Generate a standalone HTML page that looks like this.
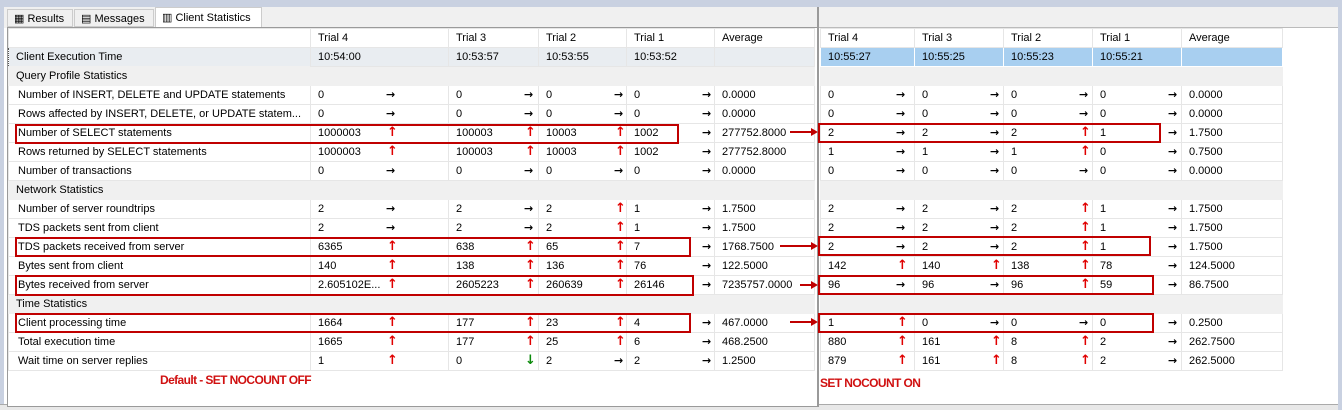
<!DOCTYPE html>
<html><head><meta charset="utf-8"><style>
*{margin:0;padding:0;box-sizing:border-box}
body{width:1342px;height:410px;background:#fff;font-family:"Liberation Sans",sans-serif;font-size:11px;color:#000;position:relative;overflow:hidden}
.abs{position:absolute}
table{border-collapse:collapse;table-layout:fixed;position:absolute}
td{height:19px;border:1px solid #e6e6e6;padding:0 0 0 7px;white-space:nowrap;overflow:hidden;position:relative;vertical-align:middle}
td.l{padding-left:9px}
tr.s td{background:#f0f0f0;border-color:#f0f0f0}
tr.s td:first-child{padding-left:7px}
tr.h td{background:#fff}
tr.c td{background:#e9edf1}
tr.c td:first-child{border:1px dotted #555;padding-left:7px}
tr.b td{background:#a8cff0;border-color:#fff}
i{font-style:normal;position:absolute;left:75px;top:1px;font-weight:bold;font-size:11px;font-family:"DejaVu Sans",sans-serif;line-height:16px}
i.u{color:#e00000;font-size:13px;left:76px}
i.d{color:#0a8a0a;font-size:13px;left:76px}
.box{position:absolute;border:2px solid #c00000}
.ar{position:absolute;height:2px;background:#c00000}
.ar:after{content:"";position:absolute;right:-6px;top:-3px;border-left:7px solid #c00000;border-top:4px solid transparent;border-bottom:4px solid transparent}
.note{position:absolute;color:#d01010;font-weight:bold;font-size:12px;letter-spacing:-0.6px}
</style></head><body>
<div class="abs" style="left:0;top:0;width:1342px;height:7px;background:#c9d1e1"></div>
<div class="abs" style="left:0;top:7px;width:1342px;height:21px;background:#f0f0f0"></div>
<div class="abs" style="left:0;top:7px;width:4px;height:403px;background:#c9d1e1"></div>
<div class="abs" style="left:0;top:404px;width:1342px;height:6px;background:#e8e8e8;border-top:1px solid #aaa"></div>
<div class="abs" style="left:1338px;top:7px;width:4px;height:403px;background:#c9d1e1"></div>
<div class="abs" style="left:7px;top:9px;width:66px;height:18px;border:1px solid #ccc;background:#f0f0f0;padding:2px 0 0 6px">▦ Results</div>
<div class="abs" style="left:74px;top:9px;width:80px;height:18px;border:1px solid #ccc;background:#f0f0f0;padding:2px 0 0 6px">▤ Messages</div>
<div class="abs" style="left:155px;top:7px;width:107px;height:21px;border:1px solid #ccc;border-bottom:none;background:#fff;padding:3px 0 0 6px">▥ Client Statistics</div>
<div class="abs" style="left:7px;top:27px;width:811px;height:380px;border:1px solid #9a9a9a;background:#fff"></div>
<div class="abs" style="left:817px;top:7px;width:2px;height:400px;background:#9a9a9a"></div>
<div class="abs" style="left:819px;top:27px;width:519px;height:1px;background:#bbb"></div>

<table style="left:8px;top:28px;width:806px">
<colgroup><col style="width:302px"><col style="width:138px"><col style="width:90px"><col style="width:88px"><col style="width:88px"><col style="width:100px"></colgroup>
<tr class="h"><td></td><td>Trial 4</td><td>Trial 3</td><td>Trial 2</td><td>Trial 1</td><td>Average</td></tr>
<tr class="c"><td>Client Execution Time</td><td>10:54:00</td><td>10:53:57</td><td>10:53:55</td><td>10:53:52</td><td></td></tr>
<tr class="s"><td>Query Profile Statistics</td><td></td><td></td><td></td><td></td><td></td></tr>
<tr><td class="l">Number of INSERT, DELETE and UPDATE statements</td><td>0<i>→</i></td><td>0<i>→</i></td><td>0<i>→</i></td><td>0<i>→</i></td><td>0.0000</td></tr>
<tr><td class="l">Rows affected by INSERT, DELETE, or UPDATE statem...</td><td>0<i>→</i></td><td>0<i>→</i></td><td>0<i>→</i></td><td>0<i>→</i></td><td>0.0000</td></tr>
<tr><td class="l">Number of SELECT statements</td><td>1000003<i class="u">↑</i></td><td>100003<i class="u">↑</i></td><td>10003<i class="u">↑</i></td><td>1002<i>→</i></td><td>277752.8000</td></tr>
<tr><td class="l">Rows returned by SELECT statements</td><td>1000003<i class="u">↑</i></td><td>100003<i class="u">↑</i></td><td>10003<i class="u">↑</i></td><td>1002<i>→</i></td><td>277752.8000</td></tr>
<tr><td class="l">Number of transactions</td><td>0<i>→</i></td><td>0<i>→</i></td><td>0<i>→</i></td><td>0<i>→</i></td><td>0.0000</td></tr>
<tr class="s"><td>Network Statistics</td><td></td><td></td><td></td><td></td><td></td></tr>
<tr><td class="l">Number of server roundtrips</td><td>2<i>→</i></td><td>2<i>→</i></td><td>2<i class="u">↑</i></td><td>1<i>→</i></td><td>1.7500</td></tr>
<tr><td class="l">TDS packets sent from client</td><td>2<i>→</i></td><td>2<i>→</i></td><td>2<i class="u">↑</i></td><td>1<i>→</i></td><td>1.7500</td></tr>
<tr><td class="l">TDS packets received from server</td><td>6365<i class="u">↑</i></td><td>638<i class="u">↑</i></td><td>65<i class="u">↑</i></td><td>7<i>→</i></td><td>1768.7500</td></tr>
<tr><td class="l">Bytes sent from client</td><td>140<i class="u">↑</i></td><td>138<i class="u">↑</i></td><td>136<i class="u">↑</i></td><td>76<i>→</i></td><td>122.5000</td></tr>
<tr><td class="l">Bytes received from server</td><td>2.605102E...<i class="u">↑</i></td><td>2605223<i class="u">↑</i></td><td>260639<i class="u">↑</i></td><td>26146<i>→</i></td><td>7235757.0000</td></tr>
<tr class="s"><td>Time Statistics</td><td></td><td></td><td></td><td></td><td></td></tr>
<tr><td class="l">Client processing time</td><td>1664<i class="u">↑</i></td><td>177<i class="u">↑</i></td><td>23<i class="u">↑</i></td><td>4<i>→</i></td><td>467.0000</td></tr>
<tr><td class="l">Total execution time</td><td>1665<i class="u">↑</i></td><td>177<i class="u">↑</i></td><td>25<i class="u">↑</i></td><td>6<i>→</i></td><td>468.2500</td></tr>
<tr><td class="l">Wait time on server replies</td><td>1<i class="u">↑</i></td><td>0<i class="d">↓</i></td><td>2<i>→</i></td><td>2<i>→</i></td><td>1.2500</td></tr>
</table>

<table style="left:820px;top:28px;width:462px">
<colgroup><col style="width:94px"><col style="width:89px"><col style="width:89px"><col style="width:89px"><col style="width:101px"></colgroup>
<tr class="h"><td>Trial 4</td><td>Trial 3</td><td>Trial 2</td><td>Trial 1</td><td>Average</td></tr>
<tr class="b"><td>10:55:27</td><td>10:55:25</td><td>10:55:23</td><td>10:55:21</td><td></td></tr>
<tr class="s"><td></td><td></td><td></td><td></td><td></td></tr>
<tr><td>0<i>→</i></td><td>0<i>→</i></td><td>0<i>→</i></td><td>0<i>→</i></td><td>0.0000</td></tr>
<tr><td>0<i>→</i></td><td>0<i>→</i></td><td>0<i>→</i></td><td>0<i>→</i></td><td>0.0000</td></tr>
<tr><td>2<i>→</i></td><td>2<i>→</i></td><td>2<i class="u">↑</i></td><td>1<i>→</i></td><td>1.7500</td></tr>
<tr><td>1<i>→</i></td><td>1<i>→</i></td><td>1<i class="u">↑</i></td><td>0<i>→</i></td><td>0.7500</td></tr>
<tr><td>0<i>→</i></td><td>0<i>→</i></td><td>0<i>→</i></td><td>0<i>→</i></td><td>0.0000</td></tr>
<tr class="s"><td></td><td></td><td></td><td></td><td></td></tr>
<tr><td>2<i>→</i></td><td>2<i>→</i></td><td>2<i class="u">↑</i></td><td>1<i>→</i></td><td>1.7500</td></tr>
<tr><td>2<i>→</i></td><td>2<i>→</i></td><td>2<i class="u">↑</i></td><td>1<i>→</i></td><td>1.7500</td></tr>
<tr><td>2<i>→</i></td><td>2<i>→</i></td><td>2<i class="u">↑</i></td><td>1<i>→</i></td><td>1.7500</td></tr>
<tr><td>142<i class="u">↑</i></td><td>140<i class="u">↑</i></td><td>138<i class="u">↑</i></td><td>78<i>→</i></td><td>124.5000</td></tr>
<tr><td>96<i>→</i></td><td>96<i>→</i></td><td>96<i class="u">↑</i></td><td>59<i>→</i></td><td>86.7500</td></tr>
<tr class="s"><td></td><td></td><td></td><td></td><td></td></tr>
<tr><td>1<i class="u">↑</i></td><td>0<i>→</i></td><td>0<i>→</i></td><td>0<i>→</i></td><td>0.2500</td></tr>
<tr><td>880<i class="u">↑</i></td><td>161<i class="u">↑</i></td><td>8<i class="u">↑</i></td><td>2<i>→</i></td><td>262.7500</td></tr>
<tr><td>879<i class="u">↑</i></td><td>161<i class="u">↑</i></td><td>8<i class="u">↑</i></td><td>2<i>→</i></td><td>262.5000</td></tr>
</table>

<div class="box" style="left:15px;top:124px;width:664px;height:20px"></div>
<div class="box" style="left:15px;top:237px;width:676px;height:20px"></div>
<div class="box" style="left:15px;top:275px;width:679px;height:21px"></div>
<div class="box" style="left:15px;top:313px;width:676px;height:20px"></div>
<div class="box" style="left:818px;top:123px;width:343px;height:20px"></div>
<div class="box" style="left:818px;top:236px;width:333px;height:20px"></div>
<div class="box" style="left:818px;top:275px;width:336px;height:20px"></div>
<div class="box" style="left:818px;top:313px;width:336px;height:20px"></div>
<div class="ar" style="left:790px;top:131px;width:22px"></div>
<div class="ar" style="left:780px;top:245px;width:32px"></div>
<div class="ar" style="left:800px;top:284px;width:12px"></div>
<div class="ar" style="left:790px;top:321px;width:22px"></div>
<div class="note" style="left:160px;top:373px">Default - SET NOCOUNT OFF</div>
<div class="note" style="left:820px;top:376px">SET NOCOUNT ON</div>
</body></html>
